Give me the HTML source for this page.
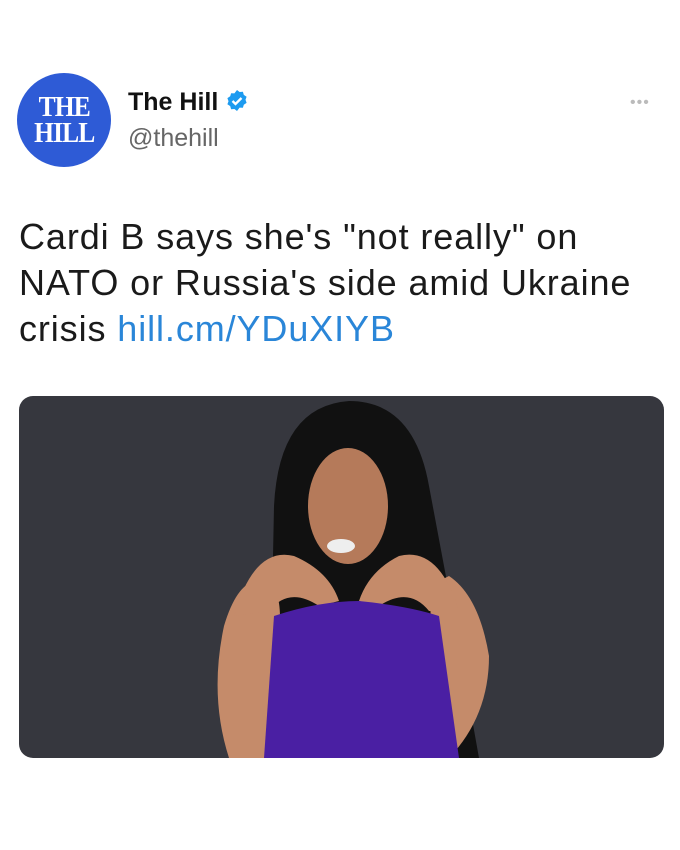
<html><head><style>
body{margin:0;background:#fff;width:680px;height:850px;position:relative;font-family:"Liberation Sans",sans-serif;overflow:hidden}
.logo{position:absolute;left:17px;top:73px;width:94px;height:94px;border-radius:50%;background:#2e5bd6;color:#fff;font-family:"Liberation Serif",serif;font-weight:bold;font-size:29px;line-height:26px;text-align:center;display:flex;align-items:center;justify-content:center;letter-spacing:-1px}
.logo span{display:inline-block;transform:scaleX(0.88)}
.name{position:absolute;left:128px;top:88px;font-size:25px;font-weight:bold;color:#111}
.handle{position:absolute;left:128px;top:124px;font-size:25px;color:#666}
.dots{position:absolute;left:630px;top:94px;font-size:16px;color:#bbb;letter-spacing:1px}
.text{position:absolute;left:19px;top:214px;font-size:36px;line-height:46px;color:#1a1a1a;white-space:nowrap;letter-spacing:0.9px}
.text a{color:#2a86d8;text-decoration:none}
.img{position:absolute;left:19px;top:396px;width:645px;height:362px;border-radius:14px;overflow:hidden;background:#36373e}
</style></head><body>
<div class="logo"><span>THE<br>HILL</span></div>
<div class="name">The Hill <svg width="24" height="24" viewBox="0 0 24 24" style="vertical-align:-3px"><path d="M12 1l2.6 2 3.3-.2.9 3.1 2.8 1.8-1.1 3.1 1.1 3.1-2.8 1.8-.9 3.1-3.3-.2L12 22l-2.6-2-3.3.2-.9-3.1-2.8-1.8 1.1-3.1-1.1-3.1 2.8-1.8.9-3.1 3.3.2z" fill="#1d9bf0"/><path d="M7.5 12l3 3 6-6" stroke="#fff" stroke-width="2.3" fill="none"/></svg></div>
<div class="handle">@thehill</div>
<div class="dots">•••</div>
<div class="text">Cardi B says she's "not really" on<br>NATO or Russia's side amid Ukraine<br>crisis <a>hill.cm/YDuXIYB</a></div>
<div class="img"><svg width="645" height="362" viewBox="0 0 645 362">
<path d="M255 110 Q260 10 330 5 Q395 5 410 90 L440 250 L460 362 L250 362 Z" fill="#111"/>
<ellipse cx="329" cy="110" rx="40" ry="58" fill="#b57a5a"/>
<path d="M210 362 Q190 300 205 230 Q220 180 245 185 Q265 190 260 240 L265 362Z" fill="#c58b6a"/>
<path d="M430 362 Q470 320 470 260 Q460 200 430 180 L410 190 L420 362Z" fill="#c58b6a"/>
<path d="M215 220 Q235 150 275 160 Q310 175 320 205 L300 210 Q270 190 250 215Z" fill="#c58b6a"/>
<path d="M440 215 Q420 150 380 160 Q350 175 340 205 L360 210 Q390 190 410 215Z" fill="#c58b6a"/>
<path d="M255 220 Q300 205 340 205 Q390 210 420 220 L440 362 L245 362Z" fill="#4a1fa3"/>
<ellipse cx="322" cy="150" rx="14" ry="7" fill="#eee"/>
</svg></div>
</body></html>
